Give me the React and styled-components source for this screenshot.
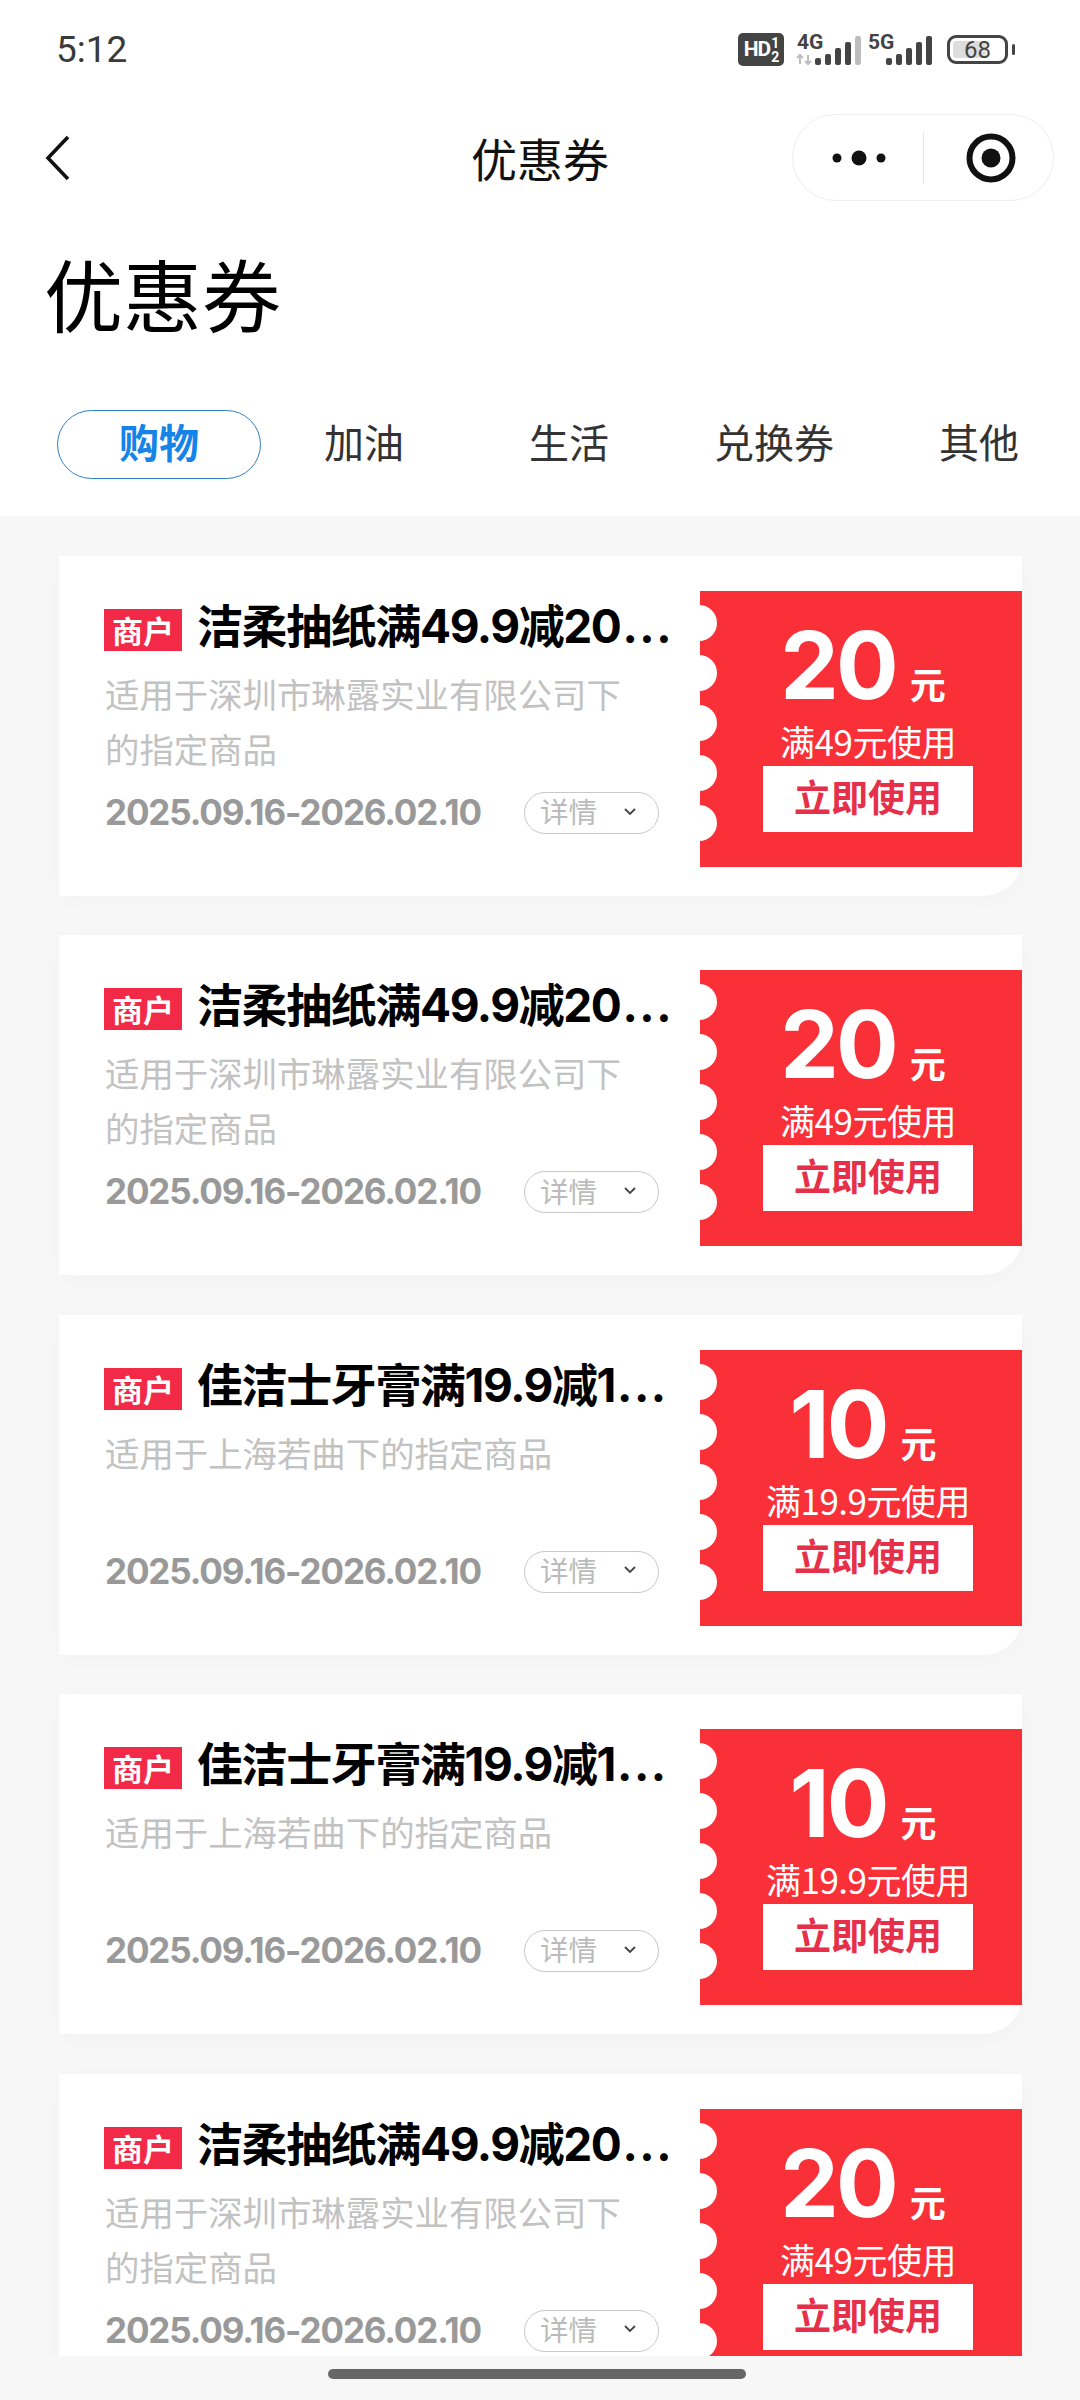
import React from "react";
import styled, { createGlobalStyle } from "styled-components";

const cjk = `"Noto Sans CJK SC", "Noto Sans", sans-serif`;
const latin = `Inter, "Noto Sans CJK SC", sans-serif`;

const Global = createGlobalStyle`
  html, body { margin: 0; padding: 0; background: #f7f7f7; }
  * { box-sizing: border-box; }
`;

const Page = styled.div`
  width: 1080px; height: 2400px; overflow: hidden;
  display: flex; flex-direction: column;
  background: #f7f7f7; font-family: ${cjk};
`;
const Header = styled.header`
  height: 516px; flex: none; background: #fff;
  display: flex; flex-direction: column;
`;
const StatusBar = styled.div`
  height: 114px; padding: 30px 72px 0 56px;
  display: flex; justify-content: space-between; align-items: flex-start;
`;
const Time = styled.div`
  font: 400 37px/40px Roboto, sans-serif; color: #3a3a3a;
`;
const StatusIcons = styled.div`
  display: flex; align-items: flex-start; margin-top: 3px;
`;
const HdBadge = styled.div`
  width: 46px; height: 33px; background: #444; border-radius: 5px; color: #fff;
  display: flex; align-items: center; justify-content: center;
  font: 700 21px/1 Roboto, sans-serif; letter-spacing: -1px;
`;
const Fraction = styled.span`
  display: flex; flex-direction: column; align-items: center;
  font-size: 14px; line-height: 14px; margin-left: 1px;
`;
const SignalSvg = styled.svg`
  display: block; margin-left: ${p => p.$gap}px; flex: none; overflow: visible;
`;
const Battery = styled.div`
  margin-left: 13px; margin-top: 2px; width: 61px; height: 29px; position: relative;
  border: 3px solid #444; border-radius: 9px; padding: 3px;
  display: flex; align-items: center; justify-content: center;
  font: 400 24px/1 Roboto, sans-serif; color: #444;
  &::before {
    content: ""; position: absolute; left: 3px; top: 3px; bottom: 3px; width: 33px;
    background: #ddd; border-radius: 3px;
  }
  &::after {
    content: ""; position: absolute; right: -10px; top: 6px; width: 3px; height: 11px;
    background: #444; border-radius: 2px;
  }
`;
const BatteryValue = styled.span` position: relative; `;

const NavBar = styled.div`
  height: 87px; padding: 0 26px 0 45px; position: relative;
  display: flex; align-items: center; justify-content: space-between;
`;
const NavTitle = styled.div`
  position: absolute; left: 0; right: 0; text-align: center;
  font-size: 46px; line-height: 87px; color: #111;
`;
const Capsule = styled.div`
  width: 262px; height: 87px; border: 1.5px solid #eee; border-radius: 44px;
  display: flex; align-items: center; background: #fff;
`;
const CapsuleCell = styled.div`
  flex: ${p => (p.$wide ? "0 0 130px" : "1")}; height: 100%;
  display: flex; align-items: center; justify-content: center;
  padding-left: ${p => p.$shift || 0}px;
`;
const CapsuleDivider = styled.div`
  width: 1px; height: 52px; background: #e6e6e6;
`;
const PageTitle = styled.h1`
  margin: 0; height: 209px; padding-top: 49px;
  padding-left: 44px; font-size: 79px; line-height: 86px; font-weight: 400; color: #000;
`;
const Tabs = styled.div`
  display: grid; grid-template-columns: repeat(5, 205px); padding-left: 57px;
`;
const Tab = styled.div`
  width: 204px; height: 69px; border-radius: 35px; padding-bottom: 7px;
  border: 1.5px solid ${p => (p.$active ? "#2f80c4" : "transparent")};
  color: ${p => (p.$active ? "#1583e8" : "#333")};
  font-size: 40px; font-weight: ${p => (p.$active ? 700 : 400)};
  display: flex; align-items: center; justify-content: center; line-height: 1;
`;

const List = styled.main`
  flex: 1; min-height: 0; overflow: hidden; padding: 40px 58px 0 59px;
  display: flex; flex-direction: column; gap: 39.4px;
`;
const Card = styled.article`
  flex: none; height: 340px; background: #fff; display: flex;
  border-bottom-right-radius: 38px;
  box-shadow: 0 4px 22px rgba(0,0,0,.025);
`;
const Info = styled.div`
  width: 641px; flex: none; padding: 53px 0 0 45px; display: flex; flex-direction: column;
`;
const TitleRow = styled.div`
  display: flex; align-items: center; height: 42px;
`;
const Tag = styled.span`
  flex: none; width: 78px; height: 42px; background: #f32a47; color: #fff;
  font-size: 31px; font-weight: 700; line-height: 42px; text-align: center;
`;
const Title = styled.h2`
  margin: 0 0 0 15px; font-size: 46px; line-height: 52px; font-weight: 700;
  color: #000; white-space: nowrap; letter-spacing: -1.4px;
  position: relative; top: -4px;
  font-family: ${latin};
`;
const Dots = styled.span`
  letter-spacing: 1.5px; margin-left: 2px;
`;
const Desc = styled.p`
  margin: 15px 0 0 1px; width: 530px; height: 113px;
  font-size: 34.4px; line-height: 55px; color: #c2c2c2;
`;
const MetaRow = styled.div`
  margin-top: 13px; height: 42px; display: flex; align-items: center; justify-content: space-between;
  width: 555px;
`;
const DateText = styled.span`
  font: 700 35px/42px ${latin}; color: #999; letter-spacing: -1.15px;
  position: relative; top: -1px; margin-left: 1px;
`;
const Detail = styled.div`
  width: 135px; height: 42px; border: 1.5px solid #c8c8c8; border-radius: 21px;
  display: flex; align-items: center; justify-content: space-between; padding: 0 22px 3px 15px;
  font-size: 28.5px; line-height: 1; color: #bbb;
`;

const Stub = styled.div`
  flex: none; width: 322px; height: 276px; margin-top: 35px; position: relative;
  background: #f93038; padding-left: 14px; color: #fff;
  display: flex; flex-direction: column; align-items: center;
`;
const Notches = styled.div`
  position: absolute; left: -19px; top: 14px;
  display: flex; flex-direction: column; gap: 14px;
`;
const Notch = styled.span`
  display: block; width: 36px; height: 36px; border-radius: 50%; background: #fff;
`;
const AmountRow = styled.div`
  height: 132px; padding: 26px 10px 0 0; display: flex; align-items: baseline; justify-content: center;
`;
const Amount = styled.span`
  font: 700 93px/96px ${latin}; letter-spacing: -3px;
`;
const Unit = styled.span`
  font-size: 36px; font-weight: 700; margin-left: 14px; line-height: 1;
`;
const Threshold = styled.div`
  font-size: 35px; line-height: 36px; height: 43px; white-space: nowrap; letter-spacing: -0.5px;
`;
const UseButton = styled.div`
  width: 210px; height: 66px; background: #fff; color: #e6304a; padding-bottom: 5px;
  display: flex; align-items: center; justify-content: center;
  font-size: 37px; font-weight: 700; line-height: 1;
`;

const Footer = styled.footer`
  height: 44px; flex: none; padding-top: 13px; display: flex; justify-content: center;
  background: #f7f7f7; position: relative;
`;
const HomeBar = styled.div`
  width: 418px; height: 10px; border-radius: 5px; background: #666; margin-left: -6px;
`;

const Signal = ({ label, faded, gap }) => (
  <SignalSvg $gap={gap} width="66" height="33" viewBox="0 0 66 33">
    <text x="0" y="16" fontFamily="Roboto, sans-serif" fontWeight="700" fontSize="21" fill="#444">{label}</text>
    {faded && (
      <path d="M3 31v-9M0 25l3-3 3 3M11 22v9M8 28l3 3 3-3" fill="none" stroke="#bdbdbd" strokeWidth="2" />
    )}
    {[[18, 7], [28, 11], [38, 17], [48, 23], [58, 29]].map(([x, h], i) => (
      <rect key={x} x={x} y={32 - h} width="6" height={h} rx="2" fill={faded && i === 4 ? "#bdbdbd" : "#444"} />
    ))}
  </SignalSvg>
);

const Coupon = ({ title, desc, amount, min }) => (
  <Card>
    <Info>
      <TitleRow>
        <Tag>商户</Tag>
        <Title>{title}<Dots>...</Dots></Title>
      </TitleRow>
      <Desc>{desc}</Desc>
      <MetaRow>
        <DateText>2025.09.16-2026.02.10</DateText>
        <Detail>
          详情
          <svg width="12" height="8" viewBox="0 0 12 8" fill="none">
            <path d="M1 1l5 5 5-5" stroke="#444" strokeWidth="1.8" />
          </svg>
        </Detail>
      </MetaRow>
    </Info>
    <Stub>
      <Notches>{[0, 1, 2, 3, 4].map(n => <Notch key={n} />)}</Notches>
      <AmountRow>
        <Amount>{amount}</Amount>
        <Unit>元</Unit>
      </AmountRow>
      <Threshold>满{min}元使用</Threshold>
      <UseButton>立即使用</UseButton>
    </Stub>
  </Card>
);

const tissue = {
  title: "洁柔抽纸满49.9减20",
  desc: "适用于深圳市琳露实业有限公司下的指定商品",
  amount: "20",
  min: "49",
};
const paste = {
  title: "佳洁士牙膏满19.9减1",
  desc: "适用于上海若曲下的指定商品",
  amount: "10",
  min: "19.9",
};
const coupons = [tissue, tissue, paste, paste, tissue];
const tabs = ["购物", "加油", "生活", "兑换券", "其他"];

export default function App() {
  return (
    <Page>
      <Global />
      <Header>
        <StatusBar>
          <Time>5:12</Time>
          <StatusIcons>
            <HdBadge>HD<Fraction><span>1</span><span>2</span></Fraction></HdBadge>
            <Signal label="4G" faded gap={13} />
            <Signal label="5G" gap={5} />
            <Battery><BatteryValue>68</BatteryValue></Battery>
          </StatusIcons>
        </StatusBar>
        <NavBar>
          <NavTitle>优惠券</NavTitle>
          <svg width="26" height="46" viewBox="0 0 26 46" fill="none">
            <path d="M23 2L3 23l20 21" stroke="#111" strokeWidth="3.6" />
          </svg>
          <Capsule>
            <CapsuleCell $wide $shift={1}>
              <svg width="54" height="16" viewBox="0 0 54 16" fill="#111">
                <circle cx="5" cy="8" r="4.5" /><circle cx="27" cy="8" r="7.5" /><circle cx="49" cy="8" r="4.5" />
              </svg>
            </CapsuleCell>
            <CapsuleDivider />
            <CapsuleCell $shift={4}>
              <svg width="50" height="50" viewBox="0 0 50 50" fill="none">
                <circle cx="25" cy="25" r="21.5" stroke="#111" strokeWidth="6" /><circle cx="25" cy="25" r="9.5" fill="#111" />
              </svg>
            </CapsuleCell>
          </Capsule>
        </NavBar>
        <PageTitle>优惠券</PageTitle>
        <Tabs>
          {tabs.map((t, i) => <Tab key={t} $active={i === 0}>{t}</Tab>)}
        </Tabs>
      </Header>
      <List>
        {coupons.map((c, i) => <Coupon key={i} {...c} />)}
      </List>
      <Footer><HomeBar /></Footer>
    </Page>
  );
}
